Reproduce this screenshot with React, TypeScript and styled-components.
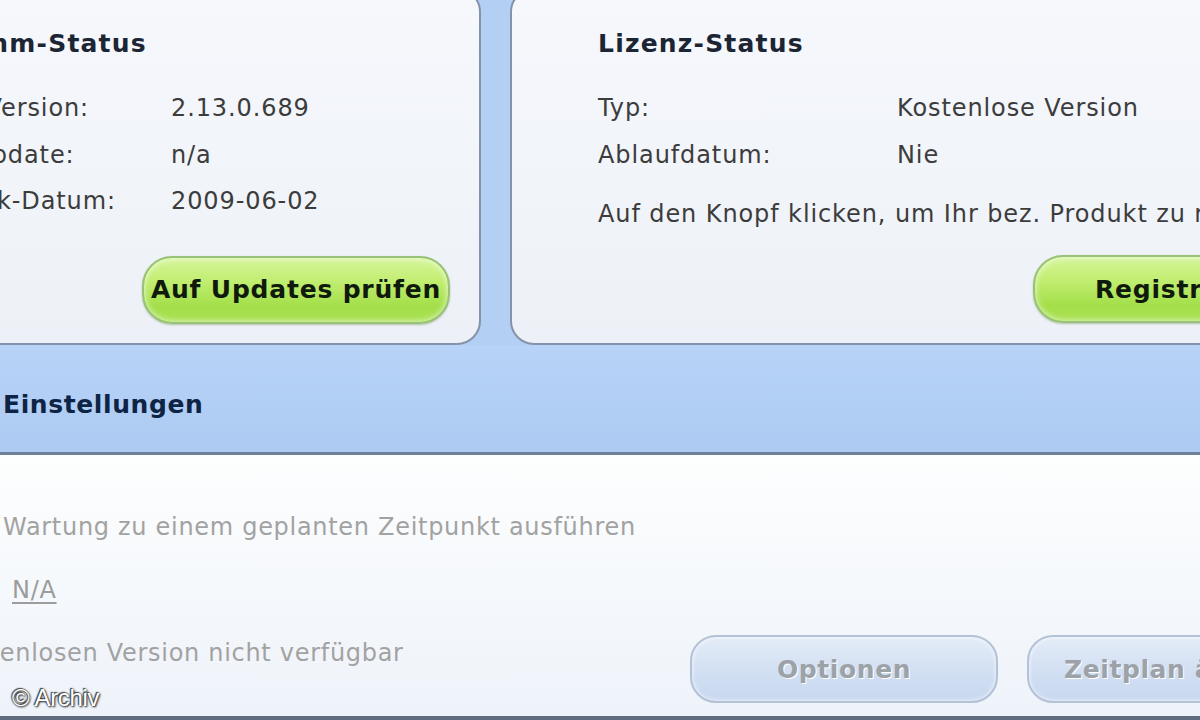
import React from 'react';
import styled, { createGlobalStyle } from 'styled-components';

const GlobalStyle = createGlobalStyle`
  html, body { margin: 0; padding: 0; }
  body {
    width: 1200px; height: 720px; overflow: hidden;
    background: #b3cff4;
    font-family: "DejaVu Sans", "Liberation Sans", sans-serif;
  }
`;

const Screen = styled.div`
  position: relative;
  width: 1200px; height: 720px; overflow: hidden;
  background: #b3cff4;
  display: flex; flex-direction: column;
`;

const TopRow = styled.div`
  display: flex; gap: 29px;
  margin: -12px 0 0 -200px;
  height: 357px; flex-shrink: 0;
`;

const Card = styled.section<{ $width: number; $pad: number }>`
  box-sizing: border-box;
  width: ${({ $width }) => $width}px; flex-shrink: 0;
  height: 100%;
  border: 2px solid #8493a9;
  border-radius: 24px;
  background: linear-gradient(#f6f8fc, #edf1f7);
  padding: 39px 29px 0 ${({ $pad }) => $pad}px;
  display: flex; flex-direction: column;
  color: #3c3c3c;
`;

const CardTitle = styled.h2<{ $shift?: number }>`
  margin: 0 0 0 ${({ $shift }) => $shift ?? 0}px;
  height: 30px; line-height: 30px;
  font-size: 25px; font-weight: bold; color: #1c2533;
  letter-spacing: 1.2px;
  white-space: nowrap;
`;

const InfoGrid = styled.div<{ $labelWidth: number }>`
  display: grid;
  grid-template-columns: ${({ $labelWidth }) => $labelWidth}px auto;
  grid-auto-rows: 46.5px; align-items: center;
  margin-top: 26px;
  font-size: 24px; letter-spacing: 0.9px;
  white-space: nowrap;
`;

const Note = styled.p`
  margin: 21px 0 0; height: 30px; line-height: 30px;
  font-size: 24px; letter-spacing: 0.9px;
  white-space: nowrap;
`;

const ButtonRow = styled.div<{ $top: number }>`
  display: flex; justify-content: flex-end;
  margin-top: ${({ $top }) => $top}px;
`;

const GreenButton = styled.button`
  box-sizing: border-box;
  width: 308px; height: 68px; padding: 0;
  border: 2px solid #98c277; border-radius: 30px;
  background: linear-gradient(#d6f59c 0%, #c2ee72 35%, #a4df4a 75%, #a9e152 100%);
  box-shadow: inset 0 0 6px rgba(255,255,255,0.8), 0 1px 2px rgba(90,120,70,0.4);
  font-family: inherit; font-size: 25px; font-weight: bold; color: #101a0c;
  letter-spacing: 0.8px; white-space: nowrap;
  display: flex; align-items: center; justify-content: center;
  flex-shrink: 0;
`;

const SettingsBar = styled.div`
  box-sizing: border-box;
  height: 110px; flex-shrink: 0;
  padding: 12px 0 0 3px;
  display: flex; align-items: center;
  background: linear-gradient(#b7d3f7, #adcaf2);
  border-bottom: 3px solid #6c8098;
  font-size: 25px; font-weight: bold; color: #0e2445;
  letter-spacing: 0.6px;
`;

const LowerPanel = styled.div`
  flex: 1;
  box-sizing: border-box;
  border-top: 1px solid #ffffff;
  border-bottom: 4px solid #5d6c7e;
  background: linear-gradient(#fdfefe, #eef3fa);
  padding: 56px 0 0 3px;
  display: flex; flex-direction: column;
  color: #a2a2a2; font-size: 24px; letter-spacing: 0.7px;
  white-space: nowrap;
`;

const Line = styled.div<{ $indent?: number }>`
  height: 30px; line-height: 30px;
  margin-left: ${({ $indent }) => $indent ?? 0}px;
`;

const Link = styled.span`
  text-decoration: underline; text-underline-offset: 4px;
  color: #9c9c9c;
`;

const Footer = styled.div`
  display: flex; align-items: flex-start; justify-content: space-between;
  margin-top: 33px;
`;

const FooterButtons = styled.div`
  display: flex; gap: 29px;
  margin-right: -135px; margin-top: -3px;
`;

const DisabledButton = styled.button`
  box-sizing: border-box;
  width: 308px; height: 68px; flex-shrink: 0;
  border: 2px solid #b3c2d6; border-radius: 26px;
  background: linear-gradient(#e4ecf7, #d0def2 60%, #c8d8ef);
  box-shadow: inset 0 0 4px rgba(255,255,255,0.9);
  font-family: inherit; font-size: 25px; font-weight: bold;
  color: #9da2a8; letter-spacing: 0.6px;
  text-shadow: 1px 1px 0 #ffffff;
  white-space: nowrap; cursor: default;
`;

const Watermark = styled.span`
  position: absolute; left: 12px; top: 684px;
  font-family: "Liberation Sans", Arial, sans-serif; font-size: 24px;
  color: #ffffff; letter-spacing: -0.3px;
  text-shadow: 0 0 2px #333, 1px 1px 2px #222, -1px -1px 1px #444;
`;

export default function App() {
  return (
    <Screen>
      <GlobalStyle />
      <TopRow>
        <Card $width={681} $pad={70}>
          <CardTitle $shift={8}>Programm-Status</CardTitle>
          <InfoGrid $labelWidth={299}>
            <span>Aktuelle Version:</span><span>2.13.0.689</span>
            <span>Letztes Update:</span><span>n/a</span>
            <span>Datenbank-Datum:</span><span>2009-06-02</span>
          </InfoGrid>
          <ButtonRow $top={31}>
            <GreenButton>Auf Updates prüfen</GreenButton>
          </ButtonRow>
        </Card>
        <Card $width={862} $pad={86}>
          <CardTitle>Lizenz-Status</CardTitle>
          <InfoGrid $labelWidth={299}>
            <span>Typ:</span><span>Kostenlose Version</span>
            <span>Ablaufdatum:</span><span>Nie</span>
          </InfoGrid>
          <Note>Auf den Knopf klicken, um Ihr bez. Produkt zu registrieren.</Note>
          <ButtonRow $top={26}>
            <GreenButton>Registrieren</GreenButton>
          </ButtonRow>
        </Card>
      </TopRow>
      <SettingsBar>Einstellungen</SettingsBar>
      <LowerPanel>
        <Line>Wartung zu einem geplanten Zeitpunkt ausführen</Line>
        <Line $indent={9} style={{ marginTop: 33 }}><Link>N/A</Link></Line>
        <Footer>
          <Line $indent={-138}>In der kostenlosen Version nicht verfügbar</Line>
          <FooterButtons>
            <DisabledButton>Optionen</DisabledButton>
            <DisabledButton>Zeitplan ändern</DisabledButton>
          </FooterButtons>
        </Footer>
      </LowerPanel>
      <Watermark>© Archiv</Watermark>
    </Screen>
  );
}
